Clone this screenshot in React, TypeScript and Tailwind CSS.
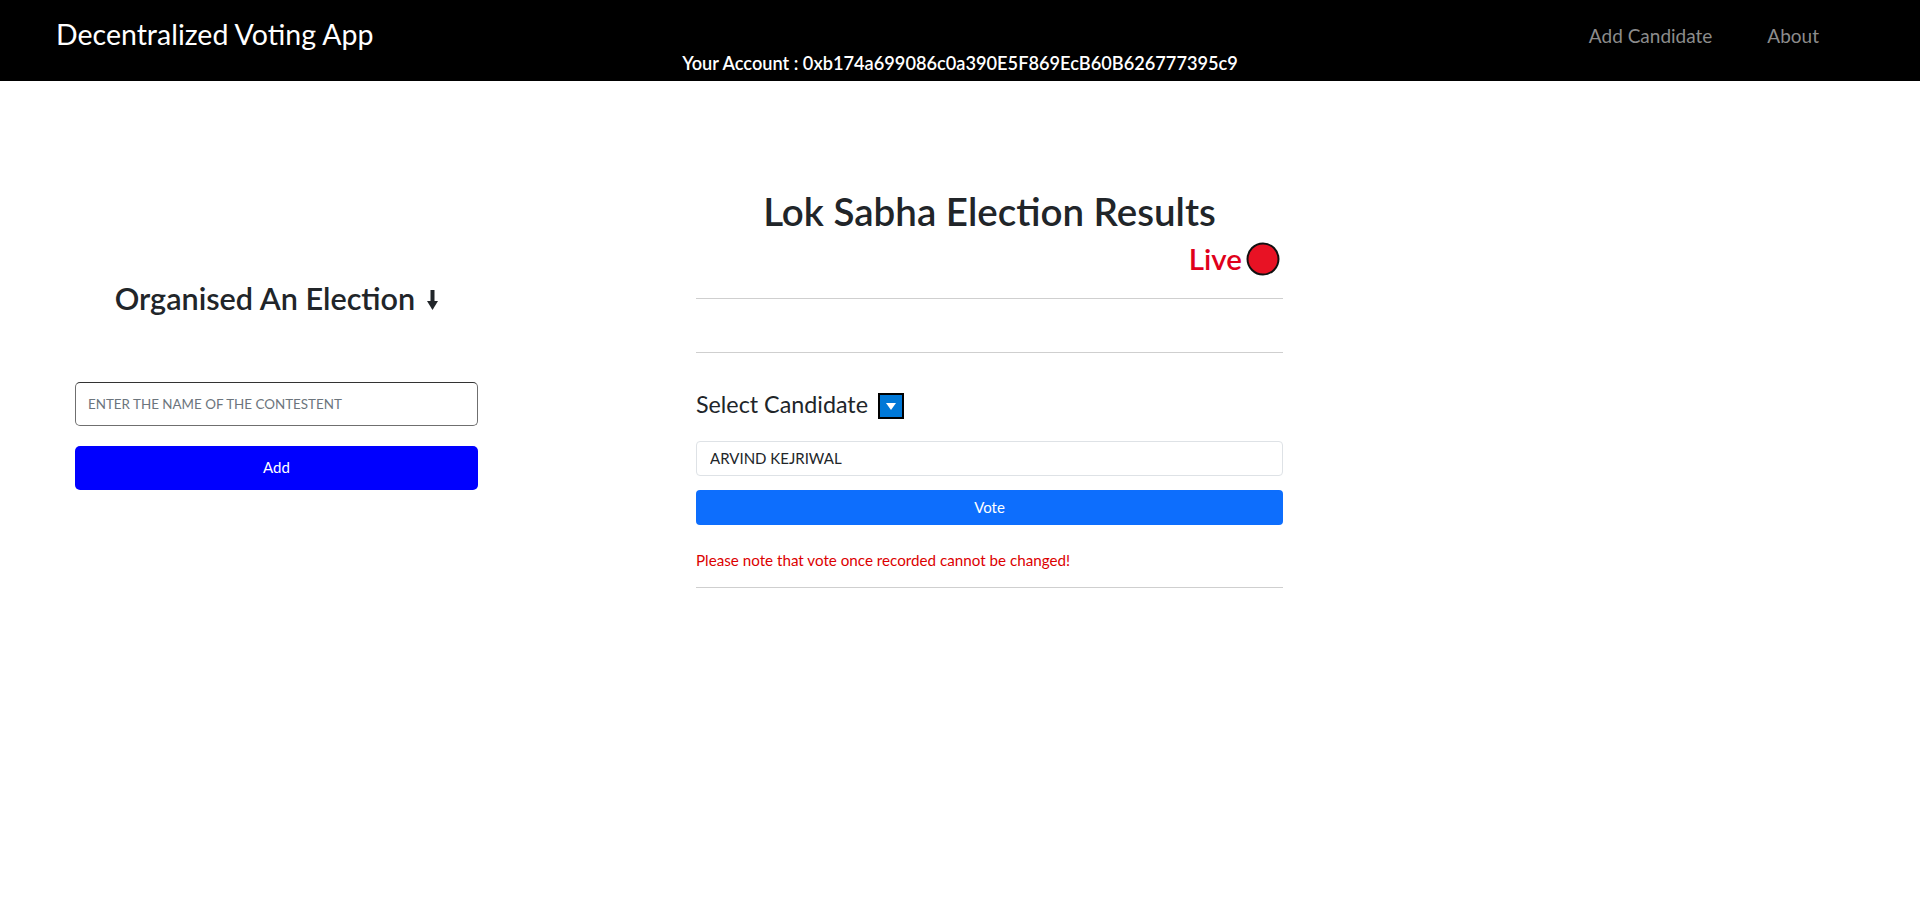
import React from "react";

function DownArrow() {
  return (
    <svg width="11" height="20" viewBox="0 0 11 20" className="inline-block ml-[12px] align-baseline">
      <rect x="3.5" y="0" width="4" height="13" fill="#212529" />
      <polygon points="0,11 11,11 5.5,20" fill="#212529" />
    </svg>
  );
}

function DropIcon() {
  return (
    <svg width="26" height="26" viewBox="0 0 26 26" className="shrink-0">
      <rect x="1" y="1" width="24" height="24" fill="#0078d7" stroke="#000" strokeWidth="2" />
      <polygon points="8,10 18,10 13,17" fill="#fff" />
    </svg>
  );
}

function RedDot() {
  return (
    <svg width="34" height="34" viewBox="0 0 34 34" className="shrink-0">
      <circle cx="17" cy="17" r="15.5" fill="#e81224" stroke="#111" strokeWidth="2" />
    </svg>
  );
}

export default function App() {
  return (
    <div className="min-h-[900px] bg-white font-['Lato',sans-serif] text-[#212529]">
      <nav className="h-[81px] bg-black flex flex-col">
        <div className="flex items-start justify-between pl-[56px] pr-[101px] pt-[20px]">
          <span className="text-[28.5px] leading-none text-white">Decentralized Voting App</span>
          <div className="flex gap-[55px] pt-[6px] text-[19px] leading-none text-[#8c8c8c]">
            <a href="#">Add Candidate</a>
            <a href="#">About</a>
          </div>
        </div>
        <div className="mt-[5px] text-center text-[18.2px] font-semibold leading-none text-white">
          Your Account : 0xb174a699086c0a390E5F869EcB60B626777395c9
        </div>
      </nav>

      <main className="flex items-start pl-[75px]">
        <section className="w-[403px] mt-[203px] flex flex-col">
          <h3 className="text-center text-[30.6px] font-semibold leading-none">
            Organised An Election
            <DownArrow />
          </h3>
          <input
            className="mt-[67px] h-[44px] w-full rounded-[5px] border border-[#6f6f6f] border-t-[#333] px-[12px] text-[13.4px] outline-none placeholder:text-[#6c757d]"
            placeholder="ENTER THE NAME OF THE CONTESTENT"
          />
          <button className="mt-[20px] h-[44px] w-full rounded-[5px] bg-[#0000ff] text-[15px] text-white">
            Add
          </button>
        </section>

        <section className="ml-[218px] w-[587px] mt-[111px] flex flex-col">
          <h1 className="text-center text-[38.5px] font-semibold leading-none">Lok Sabha Election Results</h1>
          <div className="mt-[11px] flex items-center justify-end gap-[4px] pr-[3px]">
            <span className="text-[29.5px] font-semibold leading-none text-[#e0001b]">Live</span>
            <RedDot />
          </div>
          <hr className="mt-[22px] border-[#cfcfcf]" />
          <hr className="mt-[53px] border-[#cfcfcf]" />
          <div className="mt-[40px] flex items-start gap-[10px]">
            <label className="text-[23.3px] leading-none">Select Candidate</label>
            <DropIcon />
          </div>
          <input
            readOnly
            value="ARVIND KEJRIWAL"
            className="mt-[22px] h-[35px] w-full rounded-[4px] border border-[#dee2e6] px-[13px] text-[15px] text-[#212529] outline-none"
          />
          <button className="mt-[14px] h-[35px] w-full rounded-[4px] bg-[#0d6efd] text-[15px] text-white">
            Vote
          </button>
          <p className="mt-[28px] text-[15.2px] leading-none text-[#dc0000]">
            Please note that vote once recorded cannot be changed!
          </p>
          <hr className="mt-[19px] border-[#cfcfcf]" />
        </section>
      </main>
    </div>
  );
}
